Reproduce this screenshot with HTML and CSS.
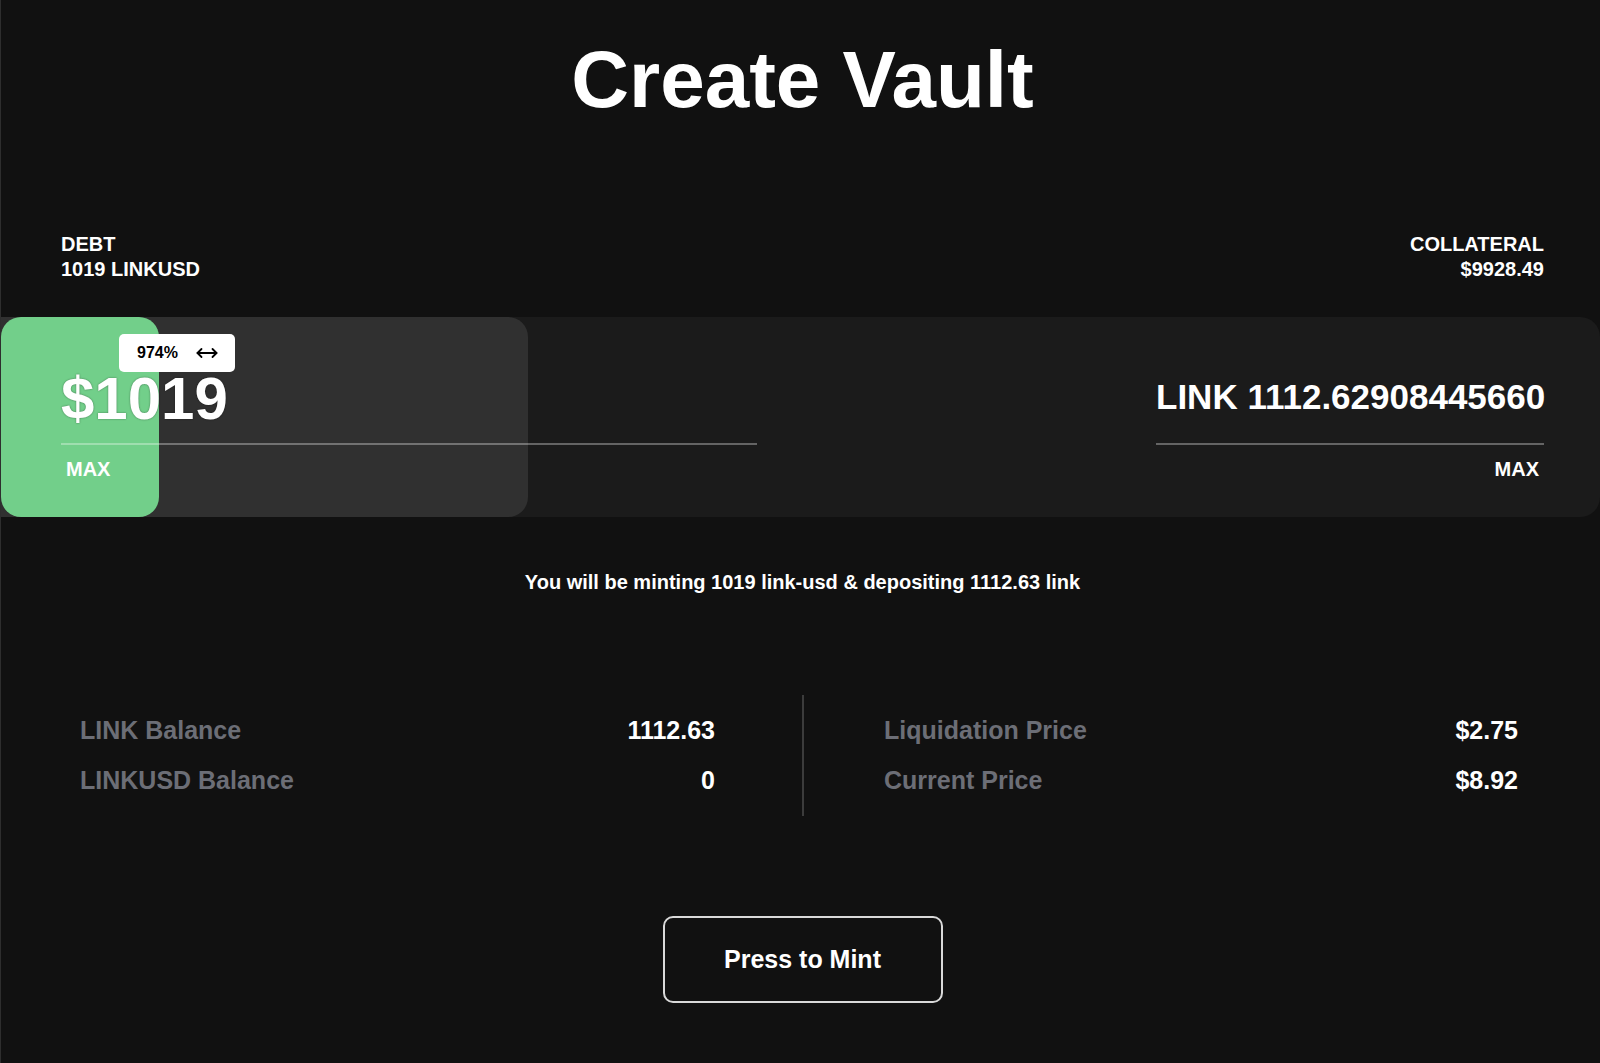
FILE: index.html
```html
<!DOCTYPE html>
<html lang="en">
<head>
<meta charset="utf-8">
<title>Create Vault</title>
<link rel="stylesheet" href="styles.css">
</head>
<body>
<main class="page">
  <h1 class="title">Create Vault</h1>

  <div class="summary">
    <div class="summary-item">
      <div>DEBT</div>
      <div>1019 LINKUSD</div>
    </div>
    <div class="summary-item summary-right">
      <div>COLLATERAL</div>
      <div>$9928.49</div>
    </div>
  </div>

  <section class="slider">
    <div class="track-fill"></div>
    <div class="thumb"></div>
    <div class="tooltip">
      <span>974%</span>
      <svg class="arrows" width="22" height="12" viewBox="0 0 22 12" fill="none" stroke="#000" stroke-width="1.8" stroke-linecap="round" stroke-linejoin="round">
        <path d="M1.5 6H20.5"/>
        <path d="M5.5 2L1.5 6L5.5 10"/>
        <path d="M16.5 2L20.5 6L16.5 10"/>
      </svg>
    </div>

    <div class="field field-debt">
      <div class="amount amount-debt">$1019</div>
      <div class="max">MAX</div>
    </div>
    <div class="field field-coll">
      <div class="amount amount-coll">LINK 1112.62908445660</div>
      <div class="max max-right">MAX</div>
    </div>
  </section>

  <p class="note">You will be minting 1019 link-usd &amp; depositing 1112.63 link</p>

  <section class="stats">
    <div class="stats-col stats-left">
      <div class="row"><span class="label">LINK Balance</span><span class="value">1112.63</span></div>
      <div class="row"><span class="label">LINKUSD Balance</span><span class="value">0</span></div>
    </div>
    <div class="divider"></div>
    <div class="stats-col stats-right">
      <div class="row"><span class="label">Liquidation Price</span><span class="value">$2.75</span></div>
      <div class="row"><span class="label">Current Price</span><span class="value">$8.92</span></div>
    </div>
  </section>

  <div class="actions">
    <button class="mint" type="button">Press to Mint</button>
  </div>
</main>
</body>
</html>
```

FILE: styles.css
```css
html {
  background: #111111;
}

body {
  margin: 0;
  width: 1599px;
  min-height: 1063px;
  background: #111111;
  border-left: 1px solid #2e2e2e;
  color: #ffffff;
  font-family: "Liberation Sans", Arial, Helvetica, sans-serif;
  font-weight: bold;
}

.page {
  display: flex;
  flex-direction: column;
}

.title {
  margin: 40px 0 0;
  padding-left: 4px;
  text-align: center;
  font-size: 80px;
  line-height: 80px;
  font-weight: bold;
}

.summary {
  display: flex;
  justify-content: space-between;
  margin-top: 112px;
  padding: 0 56px 0 60px;
  font-size: 20px;
  line-height: 25px;
}

.summary-right {
  text-align: right;
}

.slider {
  position: relative;
  margin-top: 35px;
  height: 200px;
  background: #1b1b1b;
  border-radius: 0 20px 20px 0;
  display: flex;
  justify-content: space-between;
  padding: 0 56px 0 60px;
}

.track-fill {
  position: absolute;
  left: 0;
  top: 0;
  width: 527px;
  height: 100%;
  background: #303030;
  border-radius: 0 20px 20px 0;
  z-index: 0;
}

.thumb {
  position: absolute;
  left: 0;
  top: 0;
  width: 158px;
  height: 100%;
  background: #72cf8a;
  border-radius: 20px;
  z-index: 1;
}

.tooltip {
  position: absolute;
  left: 118px;
  top: 17px;
  height: 38px;
  box-sizing: border-box;
  display: flex;
  align-items: center;
  gap: 18px;
  padding: 0 17px 0 18px;
  background: #ffffff;
  border-radius: 5px;
  color: #000000;
  font-size: 16px;
  z-index: 3;
}

.arrows {
  display: block;
}

.field {
  position: relative;
  z-index: 2;
  display: flex;
  flex-direction: column;
}

.field-debt {
  width: 696px;
  padding-top: 52px;
}

.field-coll {
  width: 388px;
  padding-top: 60px;
  text-align: right;
}

.amount {
  border-bottom: 2px solid rgba(255, 255, 255, 0.32);
  white-space: nowrap;
}

.amount-debt {
  font-size: 60px;
  line-height: 60px;
  padding-bottom: 14px;
  text-shadow: 0 0 2px rgba(0, 0, 0, 0.45);
}

.amount-coll {
  font-size: 35px;
  line-height: 40px;
  padding-bottom: 26px;
}

.max {
  margin-top: 12px;
  padding: 0 5px;
  font-size: 20px;
  line-height: 25px;
}

.note {
  margin: 53px 0 0;
  padding-left: 4px;
  text-align: center;
  font-size: 20px;
  line-height: 25px;
}

.stats {
  display: flex;
  margin-top: 100px;
  padding-left: 79px;
}

.stats-col {
  padding: 10px 0 11px;
}

.stats-left {
  width: 635px;
}

.divider {
  width: 2px;
  margin-left: 87px;
  background: #3c3c3c;
}

.stats-right {
  width: 634px;
  margin-left: 80px;
}

.row {
  display: flex;
  justify-content: space-between;
  height: 50px;
  font-size: 25px;
  line-height: 50px;
}

.label {
  color: #6c6e76;
}

.value {
  color: #ffffff;
}

.actions {
  display: flex;
  justify-content: center;
  margin-top: 100px;
  padding-left: 4px;
}

.mint {
  width: 280px;
  height: 87px;
  box-sizing: border-box;
  background: transparent;
  border: 2px solid #d9d9d9;
  border-radius: 10px;
  color: #ffffff;
  font-family: "Liberation Sans", Arial, Helvetica, sans-serif;
  font-weight: bold;
  font-size: 25px;
}
```
